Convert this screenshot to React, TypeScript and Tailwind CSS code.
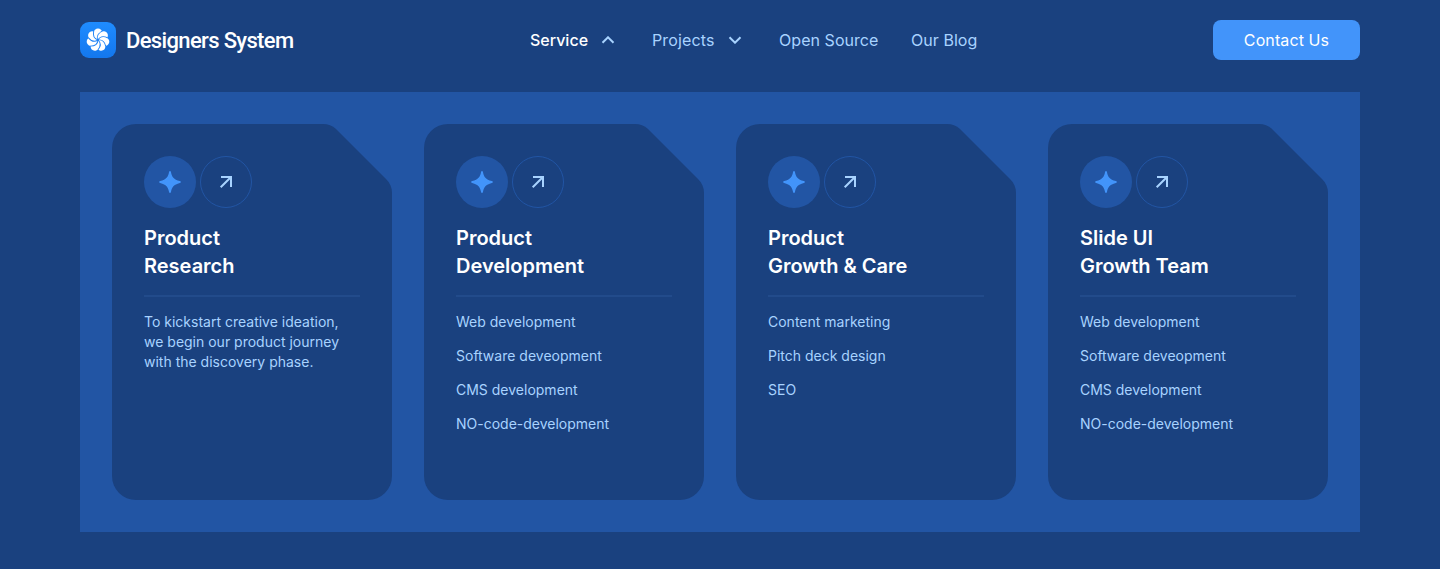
import React from "react";

const LIGHT = "#a8d3ff";

function Logo() {
  const turns = [0, 51.43, 102.86, 154.29, 205.71, 257.14, 308.57];
  return (
    <svg width="36" height="36" viewBox="0 0 36 36" fill="none">
      <defs>
        <linearGradient id="logoFill" x1="0" y1="0" x2="0" y2="36" gradientUnits="userSpaceOnUse">
          <stop stopColor="#1f8cff" />
          <stop offset="1" stopColor="#1377ee" />
        </linearGradient>
      </defs>
      <rect width="36" height="36" rx="9" fill="url(#logoFill)" />
      {turns.map((t) => (
        <circle key={t} transform={`rotate(${t} 18 18)`} cx="18" cy="10.7" r="4.2" fill="#fff" />
      ))}
      <circle cx="18" cy="18" r="8" fill="#fff" />
      {turns.map((t) => (
        <path
          key={t}
          transform={`rotate(${t} 18 18)`}
          d="M18 18C16.6 14.6 17.6 11.4 22.2 9.2"
          stroke="#1a81f6"
          strokeWidth="0.95"
        />
      ))}
    </svg>
  );
}

function Chevron({ up = false }: { up?: boolean }) {
  return (
    <svg width="14" height="8" viewBox="0 0 14 8" fill="none">
      <path d={up ? "M1.5 6.7L7 1.3L12.5 6.7" : "M1.5 1.3L7 6.7L12.5 1.3"} stroke={LIGHT} strokeWidth="2" />
    </svg>
  );
}

function Spark() {
  return (
    <svg width="22" height="22" viewBox="0 0 22 22">
      <path
        d="M11 0C11.5 0 11.8 .4 12 1.2C12.9 5.8 14.6 8.4 20.8 10C21.6 10.2 22 10.6 22 11C22 11.4 21.6 11.8 20.8 12C14.6 13.6 12.9 16.2 12 20.8C11.8 21.6 11.5 22 11 22C10.5 22 10.2 21.6 10 20.8C9.1 16.2 7.4 13.6 1.2 12C.4 11.8 0 11.4 0 11C0 10.6 .4 10.2 1.2 10C7.4 8.4 9.1 5.8 10 1.2C10.2 .4 10.5 0 11 0Z"
        fill="#4294fa"
      />
    </svg>
  );
}

function Arrow() {
  return (
    <svg width="14" height="14" viewBox="0 0 14 14" fill="none">
      <path d="M2 2H12V12M12 2L1.7 12.3" stroke={LIGHT} strokeWidth="2" />
    </svg>
  );
}

type Service = { title: [string, string]; text?: string[]; items?: string[] };

const development = ["Web development", "Software deveopment", "CMS development", "NO-code-development"];

const services: Service[] = [
  {
    title: ["Product", "Research"],
    text: ["To kickstart creative ideation,", "we begin our product journey", "with the discovery phase."],
  },
  { title: ["Product", "Development"], items: development },
  { title: ["Product", "Growth & Care"], items: ["Content marketing", "Pitch deck design", "SEO"] },
  { title: ["Slide UI", "Growth Team"], items: development },
];

function Card({ title, text, items }: Service) {
  return (
    <article className="h-[376px] w-[280px] bg-[#1a417f] p-8 [clip-path:path('M24_0H211C216_0_220.4_1.6_224_5L274_55C278_59_280_63.5_280_69V352A24_24_0_0_1_256_376H24A24_24_0_0_1_0_352V24A24_24_0_0_1_24_0Z')]">
      <div className="flex gap-1">
        <span className="flex size-[52px] items-center justify-center rounded-full bg-[#2255a4]">
          <Spark />
        </span>
        <span className="flex size-[52px] items-center justify-center rounded-full border border-[#2255a4]">
          <Arrow />
        </span>
      </div>
      <h2 className="mt-4 text-[20px] leading-7 font-semibold text-white">
        {title[0]}
        <br />
        {title[1]}
      </h2>
      <hr className="mt-[15px] border-0 border-t-2 border-[#224b8b]" />
      <div className="mt-[15px] text-[14px] leading-5 whitespace-nowrap text-[#a8d3ff]">
        {text?.map((line) => (
          <p key={line}>{line}</p>
        ))}
        {items && (
          <ul className="flex flex-col gap-3.5">
            {items.map((item) => (
              <li key={item}>{item}</li>
            ))}
          </ul>
        )}
      </div>
    </article>
  );
}

export default function App() {
  return (
    <div className="h-[569px] w-[1440px] bg-[#1a417f] px-20 font-['Inter',sans-serif]">
      <header className="flex h-[92px] items-start pt-5">
        <a className="flex w-[450px] items-center gap-2.5 pt-0.5">
          <Logo />
          <span className="pt-0.5 font-['Roboto',sans-serif] text-[22px] leading-[34px] font-medium tracking-[-0.65px] text-white">
            Designers System
          </span>
        </a>
        <nav className="flex h-10 items-center text-[16px] leading-6 whitespace-nowrap text-[#a8d3ff]">
          <a className="flex w-[122px] items-center gap-[13px] font-medium text-white">
            Service <Chevron up />
          </a>
          <a className="flex w-[127px] items-center gap-[13px] tracking-[0.15px]">
            Projects <Chevron />
          </a>
          <a className="w-[132px] tracking-[0.05px]">Open Source</a>
          <a className="tracking-[0.05px]">Our Blog</a>
        </nav>
        <button className="ml-auto h-10 w-[147px] rounded-lg bg-[#4294fa] text-[16px] tracking-[0.1px] text-white">
          Contact Us
        </button>
      </header>
      <main className="flex h-[440px] gap-8 bg-[#2255a4] p-8">
        {services.map((service) => (
          <Card key={service.title.join(" ")} {...service} />
        ))}
      </main>
    </div>
  );
}
